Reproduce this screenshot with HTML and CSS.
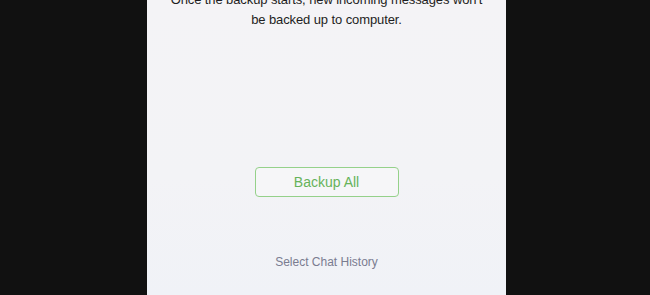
FILE: index.html
```html
<!DOCTYPE html>
<html>
<head>
<meta charset="utf-8">
<link rel="stylesheet" href="styles.css">
</head>
<body>
<div class="stage">
  <div class="panel">
    <p class="notice">Once the backup starts, new incoming messages won't<br>be backed up to computer.</p>
    <button class="backup-btn">Backup All</button>
    <a class="select-link">Select Chat History</a>
  </div>
</div>
</body>
</html>
```
FILE: styles.css
```css
html, body {
  margin: 0;
  padding: 0;
  background: #111111;
}
.stage {
  width: 650px;
  height: 295px;
  overflow: hidden;
  display: flex;
  justify-content: flex-start;
}
.panel {
  margin-left: 147px;
  width: 359px;
  height: 295px;
  background: linear-gradient(180deg, #f4f3f6 0%, #f3f3f6 60%, #f0f2f7 100%);
  display: flex;
  flex-direction: column;
  align-items: center;
  font-family: "Liberation Sans", Arial, sans-serif;
}
.notice {
  margin: -10px 0 0;
  width: 350px;
  text-align: center;
  font-size: 13px;
  line-height: 20px;
  letter-spacing: -0.1px;
  white-space: nowrap;
  color: #1e1e22;
}
.backup-btn {
  margin-top: 137px;
  width: 144px;
  height: 30px;
  border: 1px solid #95d18a;
  border-radius: 4px;
  background: #f6f6f8;
  color: #66b35a;
  font-family: "Liberation Sans", Arial, sans-serif;
  font-size: 14px;
  padding: 0;
}
.select-link {
  margin-top: 58px;
  font-size: 12px;
  line-height: 14px;
  color: #7a7c90;
}
```
